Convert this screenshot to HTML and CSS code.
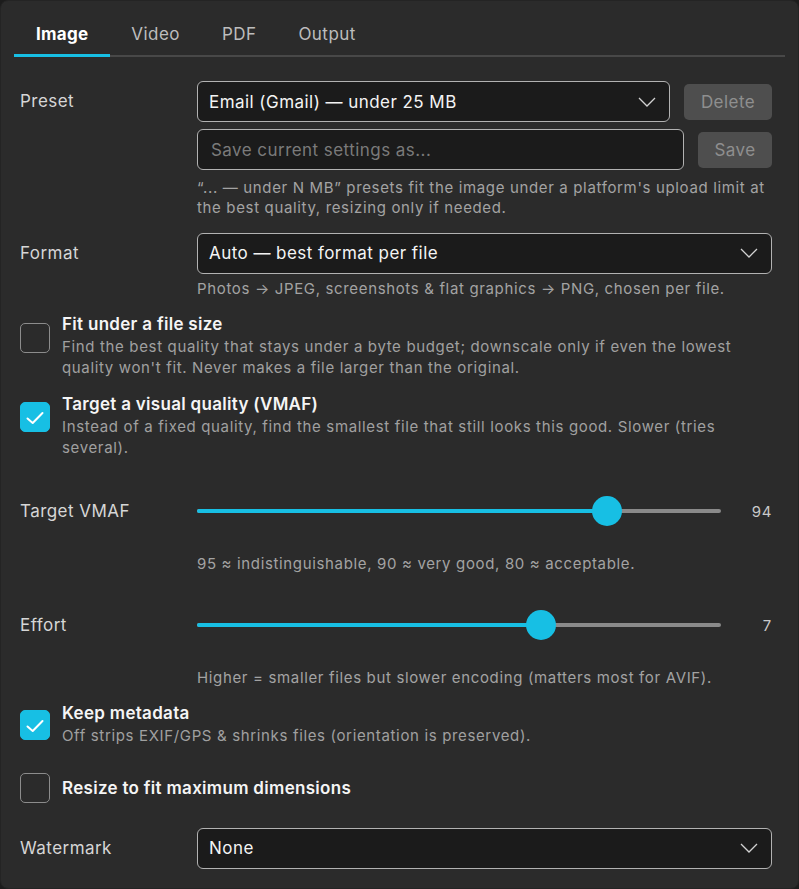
FILE: index.html
```html
<!DOCTYPE html>
<html lang="en">
<head>
<meta charset="utf-8">
<title>Image settings</title>
<link rel="stylesheet" href="styles.css">
</head>
<body>
<div class="panel">
  <nav class="tabs">
    <span class="tab active">Image</span>
    <span class="tab">Video</span>
    <span class="tab">PDF</span>
    <span class="tab">Output</span>
  </nav>

  <div class="content">
    <div class="field field-preset">
      <div class="label label-select">Preset</div>
      <div class="control">
        <div class="line">
          <div class="select grow">
            <span>Email (Gmail) — under 25 MB</span>
            <svg class="chev" width="18" height="10" viewBox="0 0 18 10"><polyline points="1,1 9,9 17,1"/></svg>
          </div>
          <button class="btn btn-delete">Delete</button>
        </div>
        <div class="line line-second">
          <div class="input grow">Save current settings as...</div>
          <button class="btn btn-save">Save</button>
        </div>
        <p class="hint hint-preset">“... — under N MB” presets fit the image under a platform's upload limit at the best quality, resizing only if needed.</p>
      </div>
    </div>

    <div class="field field-format">
      <div class="label label-select">Format</div>
      <div class="control">
        <div class="select">
          <span>Auto — best format per file</span>
          <svg class="chev" width="18" height="10" viewBox="0 0 18 10"><polyline points="1,1 9,9 17,1"/></svg>
        </div>
        <p class="hint">Photos → JPEG, screenshots &amp; flat graphics → PNG, chosen per file.</p>
      </div>
    </div>

    <div class="check check-fit">
      <span class="box"></span>
      <div class="check-text">
        <div class="check-title">Fit under a file size</div>
        <div class="check-desc">Find the best quality that stays under a byte budget; downscale only if even the lowest quality won't fit. Never makes a file larger than the original.</div>
      </div>
    </div>

    <div class="check check-vmaf">
      <span class="box on"><svg width="30" height="30" viewBox="0 0 30 30"><polyline points="7.5,16.5 12.7,21 22.5,11"/></svg></span>
      <div class="check-text">
        <div class="check-title">Target a visual quality (VMAF)</div>
        <div class="check-desc">Instead of a fixed quality, find the smallest file that still looks this good. Slower (tries several).</div>
      </div>
    </div>

    <div class="field field-slider slider-vmaf">
      <div class="label label-slider">Target VMAF</div>
      <div class="slider-line">
        <div class="track" style="--v: 78.3%">
          <div class="fill"></div>
          <div class="thumb"></div>
        </div>
        <div class="value">94</div>
      </div>
      <p class="hint hint-slider">95 ≈ indistinguishable, 90 ≈ very good, 80 ≈ acceptable.</p>
    </div>

    <div class="field field-slider slider-effort">
      <div class="label label-slider">Effort</div>
      <div class="slider-line">
        <div class="track" style="--v: 65.7%">
          <div class="fill"></div>
          <div class="thumb"></div>
        </div>
        <div class="value">7</div>
      </div>
      <p class="hint hint-slider">Higher = smaller files but slower encoding (matters most for AVIF).</p>
    </div>

    <div class="check check-meta">
      <span class="box on"><svg width="30" height="30" viewBox="0 0 30 30"><polyline points="7.5,16.5 12.7,21 22.5,11"/></svg></span>
      <div class="check-text">
        <div class="check-title">Keep metadata</div>
        <div class="check-desc">Off strips EXIF/GPS &amp; shrinks files (orientation is preserved).</div>
      </div>
    </div>

    <div class="check check-resize">
      <span class="box"></span>
      <div class="check-text">
        <div class="check-title">Resize to fit maximum dimensions</div>
      </div>
    </div>

    <div class="field field-watermark">
      <div class="label label-select">Watermark</div>
      <div class="control">
        <div class="select">
          <span>None</span>
          <svg class="chev" width="18" height="10" viewBox="0 0 18 10"><polyline points="1,1 9,9 17,1"/></svg>
        </div>
      </div>
    </div>
  </div>
</div>
</body>
</html>
```

FILE: styles.css
```css
* { box-sizing: border-box; }

html, body {
  margin: 0;
  padding: 0;
  background: #1c1c1c;
}

body {
  font-family: Inter, "Noto Sans", "Liberation Sans", sans-serif;
  color: #f2f2f2;
  letter-spacing: 0.45px;
}

.panel {
  width: 799px;
  height: 889px;
  background: #2b2b2b;
  border: 1px solid #242424;
  border-radius: 8px;
  overflow: hidden;
}

/* Tabs */
.tabs {
  display: flex;
  align-items: flex-start;
  margin: 11px 13px 0;
  border-bottom: 2px solid #484848;
}

.tab {
  padding: 11px 21px 9px;
  margin-bottom: -2px;
  font-size: 17px;
  line-height: 22px;
  color: #bdbdbd;
  border-bottom: 3px solid transparent;
}

.tab.active {
  font-weight: 700;
  letter-spacing: 0.25px;
  color: #ffffff;
  padding-left: 22px;
  padding-right: 22px;
  border-bottom-color: #17bfe4;
}

/* Content */
.content {
  display: flex;
  flex-direction: column;
  padding: 0 26px 0 19px;
}

.field {
  display: grid;
  grid-template-columns: 177px 1fr;
  align-items: start;
}

.label {
  font-size: 17px;
  color: #d6d6d6;
}

.label-select { line-height: 41px; }
.label-slider { line-height: 30px; }

.control {
  display: flex;
  flex-direction: column;
  min-width: 0;
}

.line {
  display: flex;
  align-items: center;
  gap: 14px;
}

.line-second { margin-top: 7px; }

.grow { flex: 1; min-width: 0; }

.select, .input {
  height: 41px;
  display: flex;
  align-items: center;
  justify-content: space-between;
  padding: 0 13px 0 11px;
  background: #1b1b1b;
  border: 1px solid #b2b2b2;
  border-radius: 6px;
  font-size: 17px;
  color: #f4f4f4;
}

.input {
  color: #7a7a7a;
  padding-left: 13px;
}

.chev polyline {
  fill: none;
  stroke: #d2d2d2;
  stroke-width: 1.3;
}

.btn {
  height: 36px;
  border: none;
  border-radius: 5px;
  background: #4e4e4e;
  color: #8f8f8f;
  font-family: inherit;
  font-size: 17px;
  letter-spacing: 0.45px;
  padding: 0;
}

.btn-delete { width: 88px; }
.btn-save { width: 74px; }

.hint {
  margin: 5px 0 0;
  font-size: 15px;
  line-height: 20.5px;
  letter-spacing: 0.65px;
  color: #a3a3a3;
}

.hint-preset { margin-top: 7.5px; }

.field-preset { margin-top: 24px; }
.field-format { margin-top: 14px; }

/* Checkboxes */
.check {
  display: flex;
  align-items: flex-start;
  gap: 12px;
}

.box {
  flex: none;
  width: 30px;
  height: 30px;
  border: 1px solid #8c8c8c;
  border-radius: 5px;
  margin-top: 9.5px;
  display: flex;
  align-items: center;
  justify-content: center;
}

.box.on {
  background: #17bfe4;
  border-color: #17bfe4;
}

.box svg { flex: none; margin: -1px; }

.box polyline {
  fill: none;
  stroke: #ffffff;
  stroke-width: 2;
  stroke-linecap: round;
  stroke-linejoin: round;
}

.check-title {
  font-size: 17px;
  line-height: 22px;
  font-weight: 600;
  letter-spacing: 0.3px;
  color: #f5f5f5;
}

.check-desc {
  margin-top: 2px;
  font-size: 15px;
  line-height: 20.5px;
  letter-spacing: 0.65px;
  color: #a0a0a0;
}

.check-fit { margin-top: 14px; }
.check-vmaf { margin-top: 15px; }
.check-vmaf .box { margin-top: 9px; }
.check-meta { margin-top: 14px; }
.check-meta .box { margin-top: 8px; }
.check-resize { margin-top: 26px; align-items: center; }
.check-resize .box { margin-top: 0; }

/* Sliders */
.field-slider {
  grid-template-rows: auto auto;
}

.slider-line {
  display: flex;
  align-items: center;
  height: 30px;
}

.track {
  position: relative;
  flex: 1;
  height: 4px;
  border-radius: 2px;
  background: #8a8a8a;
}

.fill {
  width: var(--v);
  height: 100%;
  border-radius: 2px;
  background: #17bfe4;
}

.thumb {
  position: absolute;
  top: 50%;
  left: var(--v);
  width: 30px;
  height: 30px;
  border-radius: 50%;
  background: #17bfe4;
  transform: translate(-50%, -50%);
}

.value {
  width: 51px;
  text-align: right;
  font-size: 15px;
  letter-spacing: 0.65px;
  color: #c9c9c9;
}

.hint-slider {
  grid-column: 2;
  margin-top: 27.5px;
}

.slider-vmaf { margin-top: 38px; }
.slider-effort { margin-top: 36px; }

.field-watermark { margin-top: 25px; }
```
